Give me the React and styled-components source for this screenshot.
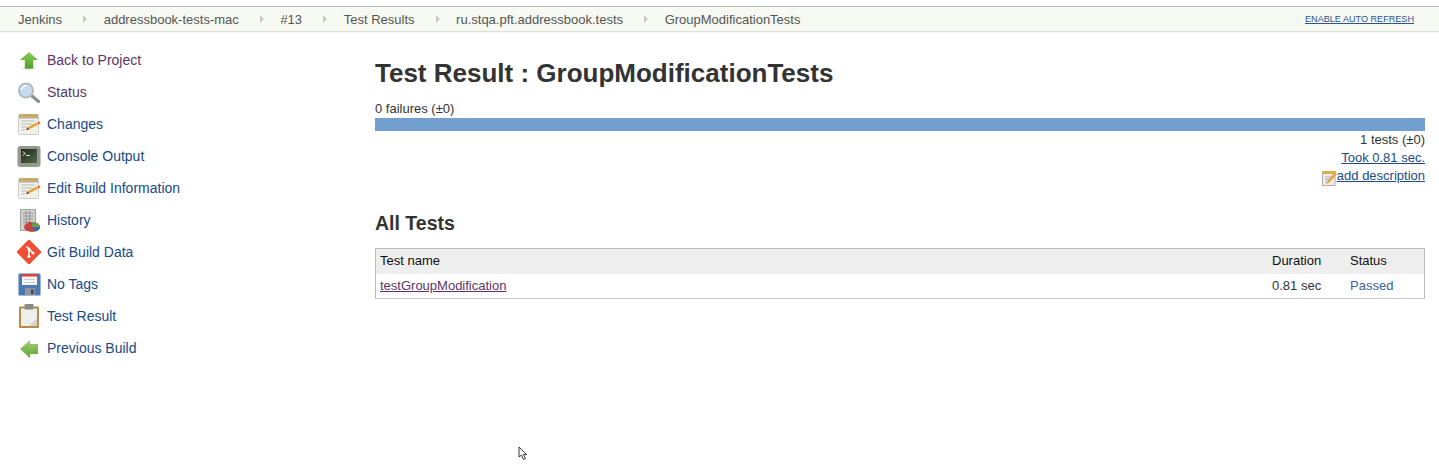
import React from 'react';
import styled, { createGlobalStyle } from 'styled-components';

const Global = createGlobalStyle`
  html, body { margin: 0; padding: 0; background: #fff; }
  body { font-family: "Liberation Sans", Arial, sans-serif; font-size: 13px; color: #333; }
  * { box-sizing: border-box; }
`;
const Page = styled.div`position: relative; width: 1439px; height: 464px; overflow: hidden; background: #fff;`;
const TopStrip = styled.div`height: 6px; padding-left: 18px; overflow: hidden;`;
const Bar = styled.div`
  height: 26px; display: flex; align-items: center; justify-content: space-between;
  background: #f6faf2; border-top: 1px solid #b8bab5; border-bottom: 1px solid #dcdfd8;
  padding: 0 25px 0 18px; box-shadow: 0 1px 1px #f2f2f2;
`;
const Crumbs = styled.div`display: flex; align-items: center;`;
const Crumb = styled.span`font-size: 13px; color: #555;`;
const Sep = styled.span`
  width: 0; height: 0; margin: 0 16.6px 0 21px;
  border-left: 4px solid #c8ccc4; border-top: 4px solid transparent; border-bottom: 4px solid transparent;
`;
const Refresh = styled.a`font-size: 9.1px; color: #2b5491; text-decoration: underline;`;
const Body = styled.div`display: flex; align-items: flex-start;`;
const Side = styled.nav`width: 375px; flex: none; padding: 12px 0 0 17px;`;
const Item = styled.a`
  display: flex; align-items: center; gap: 6px; height: 32px;
  font-size: 14px; color: ${p => p.$v ? '#5c3566' : '#204a87'};
`;
const IconBox = styled.svg`width: 24px; height: 24px; flex: none; filter: blur(0.35px);`;
const Main = styled.main`width: 1050px; flex: none; padding-top: 26px;`;
const H1 = styled.h1`margin: 0; font-size: 26px; line-height: 30px; font-weight: 700; color: #333;`;
const Fail = styled.div`margin-top: 12px; line-height: 17px; height: 16px;`;
const Progress = styled.div`height: 13px; background: #729fcf; margin-top: 2px;`;
const Right = styled.div`line-height: 18px; font-size: 13px; display: flex; justify-content: flex-end; align-items: center; height: 18px;`;
const Link = styled.a`color: #204a87; text-decoration: underline;`;
const H2 = styled.h2`margin: 26px 0 0; font-size: 19.5px; line-height: 24px; font-weight: 700; color: #333;`;
const Table = styled.div`margin-top: 13px; border: 1px solid #bbb; border-bottom-color: #c8c8c8;`;
const Row = styled.div`
  display: grid; grid-template-columns: 1fr 78px 74px; align-items: center; height: ${p => p.$h}px;
  padding: 0 0 ${p => p.$head ? 2 : 1}px 4px; background: ${p => p.$head ? '#eeeeee' : '#fff'}; color: ${p => p.$head ? '#111' : '#333'};
`;
const TestLink = styled.a`color: #5c3566; text-decoration: underline;`;
const Passed = styled.span`color: #3a6299;`;
const Cursor = styled.svg`position: absolute; left: 518px; top: 446px; width: 10px; height: 16px;`;

const UpArrow = () => (
  <IconBox viewBox="0 0 24 24">
    <defs><linearGradient id="ga" x1="0" y1="0" x2="0" y2="1"><stop offset="0" stopColor="#8ccb57" /><stop offset="1" stopColor="#4f9f2a" /></linearGradient></defs>
    <ellipse cx="12" cy="20.5" rx="7" ry="1.2" fill="#dcdcdc" />
    <path d="M12 4 L21 12 H16.2 V20.5 H7.8 V12 H3 Z" fill="url(#ga)" />
  </IconBox>
);
const LeftArrow = () => (
  <IconBox viewBox="0 0 24 24">
    <defs><linearGradient id="gl" x1="0" y1="0" x2="0" y2="1"><stop offset="0" stopColor="#a3d477" /><stop offset="1" stopColor="#5fa032" /></linearGradient></defs>
    <path d="M3 13 L13 4 V8 H21 V18 H13 V22 Z" fill="url(#gl)" />
  </IconBox>
);
const Magnifier = () => (
  <IconBox viewBox="0 0 24 24">
    <line x1="15" y1="16" x2="21.5" y2="21.5" stroke="#8b8f92" strokeWidth="3.2" strokeLinecap="round" />
    <circle cx="9" cy="10.5" r="7" fill="#c7daef" stroke="#b4bac0" strokeWidth="2" />
    <path d="M4.5 10 A5 5 0 0 1 9.5 5.5" stroke="#fff" strokeWidth="1.6" fill="none" />
  </IconBox>
);
const Notepad = () => (
  <IconBox viewBox="0 0 24 24">
    <rect x="1.5" y="3" width="20" height="19.5" rx="1" fill="#f0f0ec" stroke="#cfcfca" />
    <rect x="2" y="2" width="19" height="3.5" fill="#c8ab6c" />
    <path d="M2 6 H21" stroke="#8a7a55" strokeWidth=".6" />
    <path d="M4.5 9 H18 M4.5 12 H16 M4.5 15 H10 M4.5 18 H8" stroke="#bdbdb8" />
    <path d="M9 18 L10.5 15.2 L22 9.5 L23.5 11.5 L12 17.5 Z" fill="#e8a33f" />
    <path d="M9 18 L10.5 15.2 L12 17.5 Z" fill="#5a4632" />
    <path d="M22 9.5 L23.5 11.5 L22.3 12.1 L20.9 10.1 Z" fill="#d1564a" />
  </IconBox>
);
const Terminal = () => (
  <IconBox viewBox="0 0 24 24">
    <defs><linearGradient id="gt" x1="0" y1="0" x2="1" y2="1"><stop offset="0" stopColor="#1e2818" /><stop offset="1" stopColor="#56654a" /></linearGradient></defs>
    <rect x="0.5" y="2" width="23" height="21" rx="3" fill="#96978f" />
    <rect x="4" y="5" width="16" height="14" fill="url(#gt)" />
    <path d="M5.5 7.5 L8.5 9.5 L5.5 11.5" stroke="#d5e0ce" fill="none" />
    <path d="M9 11.5 H13" stroke="#d5e0ce" />
    <rect x="10" y="20.2" width="4" height="1.4" fill="#65b345" />
  </IconBox>
);
const History = () => (
  <IconBox viewBox="0 0 24 24">
    <rect x="3.5" y="1.5" width="15" height="21" fill="#cfcfcd" stroke="#a2a2a0" />
    <path d="M6 5 H16 M6 8 H16 M6 11 H16 M6 14 H14 M9 3 V16 M12.5 3 V14" stroke="#8e8e8c" strokeWidth=".8" />
    <ellipse cx="15" cy="19" rx="8" ry="5" fill="#c9423c" />
    <path d="M15 19 L15 14 A8 5 0 0 1 23 19 Z" fill="#6d9a48" />
    <path d="M15 19 L23 19 A8 5 0 0 1 18 23.6 Z" fill="#3f6aa8" />
  </IconBox>
);
const Git = () => (
  <IconBox viewBox="0 0 24 24">
    <rect x="3" y="3" width="18" height="18" rx="1.5" transform="rotate(45 12 12)" fill="#ef4f35" />
    <path d="M9.5 6.5 L16 13 M12 9 V17" stroke="#fff" strokeWidth="1.5" />
    <circle cx="12" cy="9" r="1.6" fill="#fff" />
    <circle cx="12" cy="16.5" r="1.6" fill="#fff" />
    <circle cx="16" cy="13" r="1.6" fill="#fff" />
  </IconBox>
);
const Floppy = () => (
  <IconBox viewBox="0 0 24 24">
    <rect x="1.5" y="1.5" width="22" height="22" rx="1.5" fill="#4c78b5" stroke="#a3b8d6" />
    <rect x="5" y="2" width="15" height="11" fill="#f5f5f5" />
    <rect x="5" y="2" width="15" height="2.5" fill="#d9433d" />
    <path d="M7 7.5 H18 M7 10.5 H18" stroke="#ccc" />
    <rect x="8" y="16" width="10" height="7" fill="#8d949c" />
    <rect x="14" y="17.5" width="2.5" height="4.5" fill="#3d4650" />
  </IconBox>
);
const Clipboard = () => (
  <IconBox viewBox="0 0 24 24">
    <rect x="2" y="2.5" width="20" height="21.5" rx="1" fill="#b98a4a" />
    <rect x="4" y="4.5" width="16" height="17.5" fill="#eeeeec" />
    <path d="M12 22 L20 14 V22 Z" fill="#d5d5d2" />
    <rect x="7.5" y="0" width="9" height="5.5" rx="1" fill="#888a85" />
  </IconBox>
);
const SmallNote = styled.svg`width: 15px; height: 16px; flex: none; margin-top: 3px; filter: blur(0.3px);`;
const Note = () => (
  <SmallNote viewBox="0 0 15 16">
    <rect x="0.5" y="2" width="12.5" height="13.5" fill="#eee" stroke="#aaa" />
    <rect x="0.5" y="1" width="13" height="3" fill="#d8b24c" />
    <path d="M3 7 H10 M3 9.5 H8 M3 12 H6" stroke="#aaa" />
    <path d="M4 14 L5.5 11 L13 2 L15 4 L7 13 Z" fill="#e5a53a" />
  </SmallNote>
);

const items = [
  [UpArrow, 'Back to Project', true],
  [Magnifier, 'Status', true],
  [Notepad, 'Changes'],
  [Terminal, 'Console Output'],
  [Notepad, 'Edit Build Information'],
  [History, 'History'],
  [Git, 'Git Build Data'],
  [Floppy, 'No Tags'],
  [Clipboard, 'Test Result'],
  [LeftArrow, 'Previous Build'],
];
const crumbs = ['Jenkins', 'addressbook-tests-mac', '#13', 'Test Results', 'ru.stqa.pft.addressbook.tests', 'GroupModificationTests'];

export default function App() {
  return (
    <Page>
      <Global />
      <TopStrip>
        <svg width="34" height="6" viewBox="0 0 34 6">
          <path d="M0 6 L2 1 L9 0 H27 L33 1 L34 6 Z" fill="#1f2a3a" />
          <path d="M11 1 L17 4 L23 1 L23 6 H11 Z" fill="#c8332d" />
        </svg>
      </TopStrip>
      <Bar>
        <Crumbs>
          {crumbs.map((t, i) => (
            <React.Fragment key={t}>
              <Crumb>{t}</Crumb>
              {i < crumbs.length - 1 && <Sep />}
            </React.Fragment>
          ))}
        </Crumbs>
        <Refresh>ENABLE AUTO REFRESH</Refresh>
      </Bar>
      <Body>
        <Side>
          {items.map(([I, t, v]) => (
            <Item key={t} $v={v}><I />{t}</Item>
          ))}
        </Side>
        <Main>
          <H1>Test Result : GroupModificationTests</H1>
          <Fail>0 failures (±0)</Fail>
          <Progress />
          <Right>1 tests (±0)</Right>
          <Right><Link>Took 0.81 sec.</Link></Right>
          <Right><Note /><Link>add description</Link></Right>
          <H2>All Tests</H2>
          <Table>
            <Row $head $h={25}><span>Test name</span><span>Duration</span><span>Status</span></Row>
            <Row $h={24}><TestLink>testGroupModification</TestLink><span>0.81 sec</span><Passed>Passed</Passed></Row>
          </Table>
        </Main>
      </Body>
      <Cursor viewBox="0 0 10 16">
        <path d="M1 1 V11 L3.5 9 L5.5 13.5 L7.5 12.5 L5.5 8.5 H8.5 Z" fill="#fff" stroke="#222" strokeWidth="0.9" />
      </Cursor>
    </Page>
  );
}
